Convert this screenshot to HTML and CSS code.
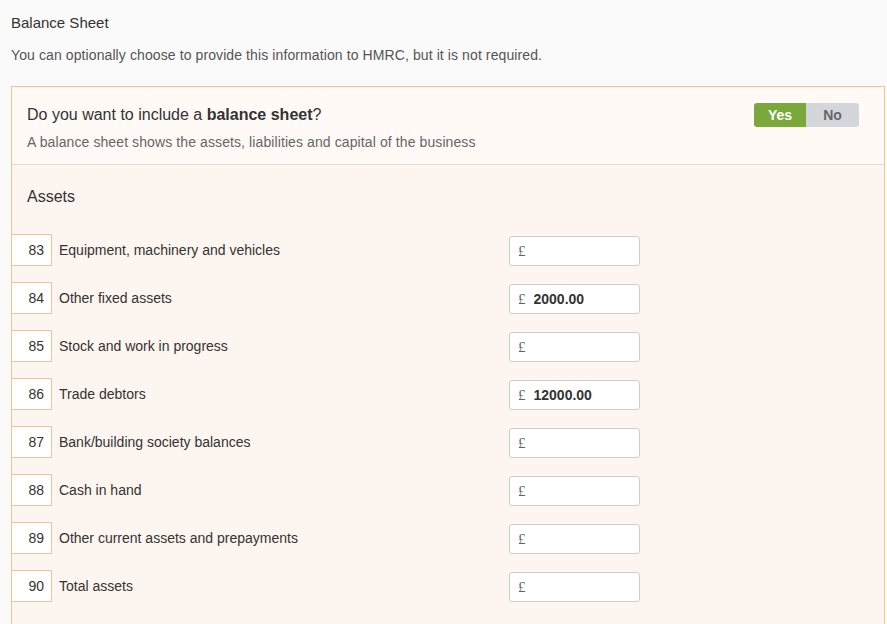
FILE: index.html
```html
<!DOCTYPE html>
<html lang="en">
<head>
    <meta charset="UTF-8">
    <meta name="viewport" content="width=device-width, initial-scale=1.0">
    <title>Balance Sheet</title>
    <link rel="stylesheet" href="styles.css">
</head>
<body>
    <h1 class="page-title">Balance Sheet</h1>
    <p class="page-intro">You can optionally choose to provide this information to HMRC, but it is not required.</p>

    <div class="card">
        <div class="card-header">
            <div class="question">
                <h2>Do you want to include a <strong>balance sheet</strong>?</h2>
                <p>A balance sheet shows the assets, liabilities and capital of the business</p>
            </div>
            <div class="toggle">
                <button class="toggle-btn active">Yes</button>
                <button class="toggle-btn">No</button>
            </div>
        </div>

        <div class="card-body">
            <h3 class="section-title">Assets</h3>

            <div class="row">
                <span class="box-number">83</span>
                <label class="row-label" for="box83">Equipment, machinery and vehicles</label>
                <div class="money-input"><span class="currency">£</span><input id="box83" type="text"></div>
            </div>
            <div class="row">
                <span class="box-number">84</span>
                <label class="row-label" for="box84">Other fixed assets</label>
                <div class="money-input"><span class="currency">£</span><input id="box84" type="text" value="2000.00"></div>
            </div>
            <div class="row">
                <span class="box-number">85</span>
                <label class="row-label" for="box85">Stock and work in progress</label>
                <div class="money-input"><span class="currency">£</span><input id="box85" type="text"></div>
            </div>
            <div class="row">
                <span class="box-number">86</span>
                <label class="row-label" for="box86">Trade debtors</label>
                <div class="money-input"><span class="currency">£</span><input id="box86" type="text" value="12000.00"></div>
            </div>
            <div class="row">
                <span class="box-number">87</span>
                <label class="row-label" for="box87">Bank/building society balances</label>
                <div class="money-input"><span class="currency">£</span><input id="box87" type="text"></div>
            </div>
            <div class="row">
                <span class="box-number">88</span>
                <label class="row-label" for="box88">Cash in hand</label>
                <div class="money-input"><span class="currency">£</span><input id="box88" type="text"></div>
            </div>
            <div class="row">
                <span class="box-number">89</span>
                <label class="row-label" for="box89">Other current assets and prepayments</label>
                <div class="money-input"><span class="currency">£</span><input id="box89" type="text"></div>
            </div>
            <div class="row">
                <span class="box-number">90</span>
                <label class="row-label" for="box90">Total assets</label>
                <div class="money-input"><span class="currency">£</span><input id="box90" type="text"></div>
            </div>
        </div>
    </div>
</body>
</html>
```

FILE: styles.css
```css
body {
    font-family: "Liberation Sans", Arial, sans-serif;
    margin: 0;
    padding: 13px 2px 0 11px;
    background-color: #fafafa;
    color: #333;
    overflow: hidden;
}

.page-title {
    margin: 0;
    font-size: 15px;
    font-weight: normal;
    line-height: 20px;
    color: #333;
}

.page-intro {
    margin: 12px 0 0;
    font-size: 14px;
    line-height: 20px;
    letter-spacing: 0.1px;
    color: #555;
}

.card {
    margin-top: 21px;
    border: 1px solid #f6c48a;
    border-bottom: none;
    background-color: #fdf5ef;
}

.card-header {
    display: flex;
    justify-content: space-between;
    align-items: flex-start;
    padding: 17px 25px 12px 15px;
    background-color: #fffaf6;
    border-bottom: 1px solid #dedede;
}

.question h2 {
    margin: 0;
    font-size: 16px;
    font-weight: normal;
    line-height: 22px;
    color: #333;
}

.question p {
    margin: 6px 0 0;
    font-size: 14px;
    line-height: 20px;
    letter-spacing: 0.1px;
    color: #666;
}

.toggle {
    display: flex;
    margin-top: -1px;
}

.toggle-btn {
    width: 53px;
    height: 24px;
    padding: 0;
    border: none;
    font-family: inherit;
    font-size: 14px;
    font-weight: bold;
    color: #666;
    background-color: #d3d7db;
    cursor: pointer;
}

.toggle-btn:first-child {
    width: 52px;
    border-radius: 3px 0 0 3px;
}

.toggle-btn:last-child {
    border-radius: 0 3px 3px 0;
}

.toggle-btn.active {
    background-color: #7aa83a;
    color: white;
}

.card-body {
    padding: 22px 0 40px;
}

.section-title {
    margin: 0 0 27px 15px;
    font-size: 16px;
    font-weight: normal;
    line-height: 20px;
    color: #333;
}

.row {
    display: flex;
    align-items: flex-start;
    margin: 0 0 16px -1px;
}

.box-number {
    width: 32px;
    height: 30px;
    padding-right: 7px;
    line-height: 30px;
    text-align: right;
    font-size: 14px;
    background-color: white;
    border: 1px solid #f6c48a;
}

.row-label {
    width: 450px;
    margin-left: 7px;
    font-size: 14px;
    line-height: 32px;
    color: #333;
}

.money-input {
    display: flex;
    align-items: center;
    width: 129px;
    height: 28px;
    margin-top: 2px;
    background-color: white;
    border: 1px solid #cdcdcd;
    border-radius: 3px;
}

.currency {
    margin-left: 8px;
    font-family: "Liberation Serif", serif;
    font-size: 15px;
    color: #5a6470;
}

.money-input input {
    width: 90px;
    margin-left: 8px;
    padding: 0;
    border: none;
    outline: none;
    background: transparent;
    font-family: inherit;
    font-size: 14px;
    font-weight: bold;
    color: #333;
}
```
